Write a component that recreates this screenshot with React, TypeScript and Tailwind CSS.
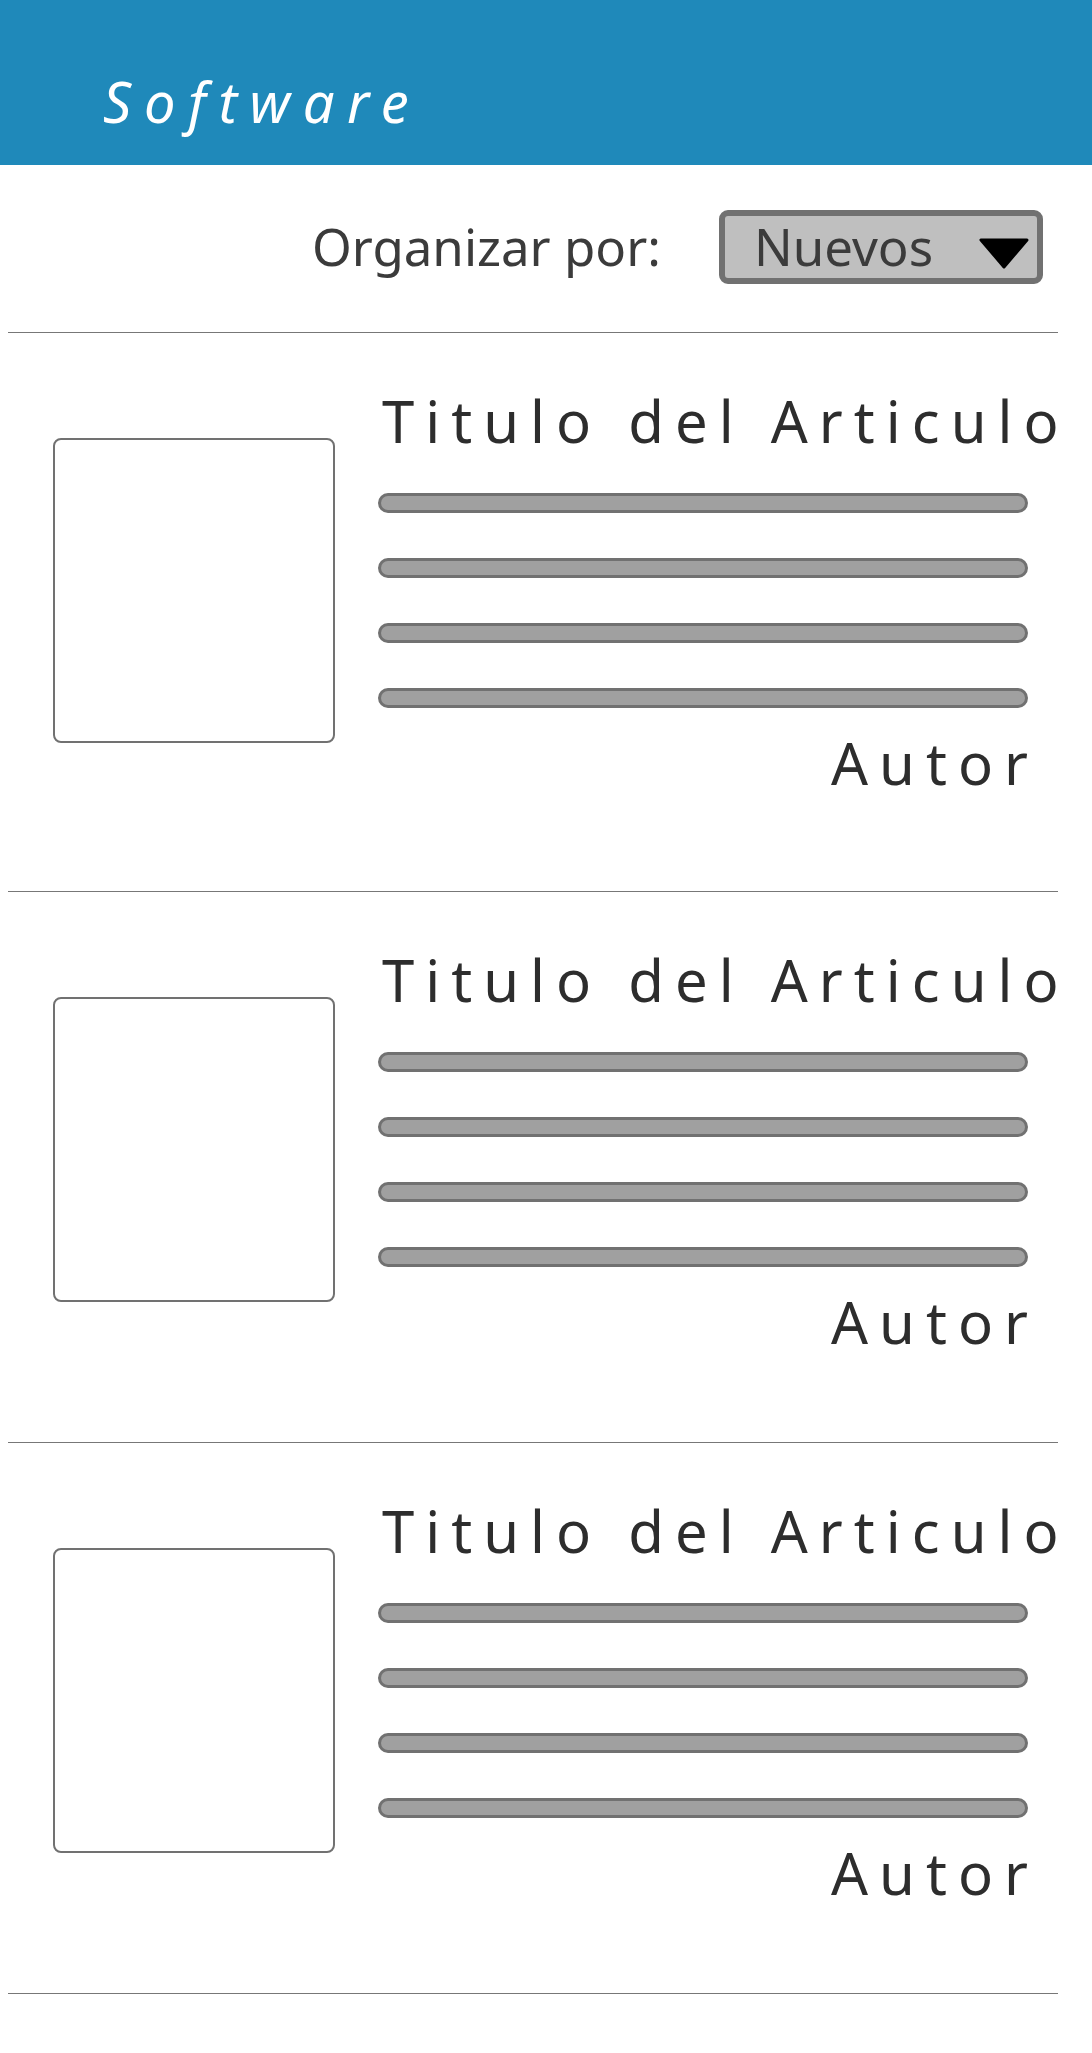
const articles = [
  { id: 1, pad: 'pb-[99px]' },
  { id: 2, pad: 'pb-[91px]' },
  { id: 3, pad: 'pb-[91px]' },
]

function Divider() {
  return <div className="ml-[8px] h-px w-[1050px] bg-[#777777]" />
}

function TextBar() {
  return <div className="h-[20px] w-[650px] rounded-full border-[3px] border-[#717171] bg-[#a0a0a0]" />
}

function ArticleCard({ pad }: { pad: string }) {
  return (
    <div className={`flex items-start pl-[53px] ${pad}`}>
      {/* thumbnail placeholder */}
      <div className="mt-[105px] h-[305px] w-[282px] shrink-0 rounded-[8px] border-2 border-[#717171] bg-white" />

      <div className="ml-[43px] flex w-[650px] flex-col">
        <h2 className="mt-[59px] ml-[4px] whitespace-nowrap text-[58px] leading-none tracking-[0.19em] text-[#2d2d2d]">
          Titulo del Articulo
        </h2>
        <div className="mt-[43px] flex flex-col gap-[45px]">
          <TextBar />
          <TextBar />
          <TextBar />
          <TextBar />
        </div>
        <p className="mt-[26px] -mr-[11px] text-right text-[58px] leading-none tracking-[0.19em] text-[#2d2d2d]">Autor</p>
      </div>
    </div>
  )
}

export default function App() {
  return (
    <div className="min-h-[2053px] w-[1092px] bg-white font-['Noto_Sans',sans-serif]">
      {/* Header */}
      <header className="h-[165px] bg-[#1f89ba] pl-[103px] pt-[73px]">
        <h1 className="text-[56px] italic leading-none tracking-[0.225em] text-white">Software</h1>
      </header>

      {/* Sort row */}
      <div className="flex h-[167px] items-center gap-[58px] pb-[4px] pl-[312px]">
        <span className="text-[51px] leading-none text-[#3b3b3b]">Organizar por:</span>
        <div className="flex h-[74px] w-[324px] items-center rounded-[9px] border-[6px] border-[#717171] bg-[#bfbfbf] pl-[29px]">
          <span className="text-[51px] leading-none text-[#3b3b3b]">Nuevos</span>
          <svg className="ml-auto mr-[8px] mt-[14px]" width="50" height="31" viewBox="0 0 50 31">
            <path d="M2 2 L48 2 L25 29 Z" fill="#000" stroke="#000" strokeWidth="3" strokeLinejoin="round" />
          </svg>
        </div>
      </div>

      <Divider />
      {articles.map((a) => (
        <div key={a.id}>
          <ArticleCard pad={a.pad} />
          <Divider />
        </div>
      ))}
    </div>
  )
}
